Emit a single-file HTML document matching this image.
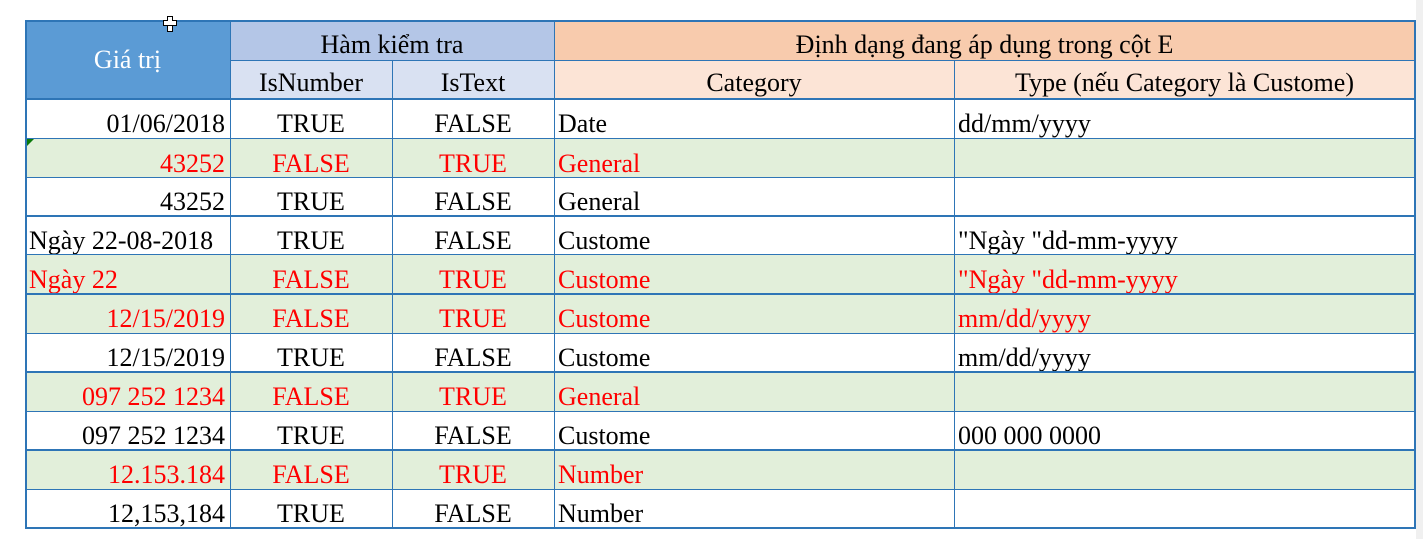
<!DOCTYPE html>
<html><head><meta charset="utf-8"><style>
body{margin:0;width:1423px;height:539px;background:#fff;position:relative;overflow:hidden;font-family:"Liberation Serif","Times New Roman",Times,serif;font-size:26px;}
.c{position:absolute;box-sizing:border-box;display:flex;align-items:flex-end;line-height:26px;padding-bottom:1px;white-space:nowrap;font-family:"Liberation Serif","Times New Roman",Times,serif;}
.r{justify-content:flex-end;padding-right:5px}
.m{justify-content:center}
.l{padding-left:4px}
.red{color:#f00}
.hl{position:absolute;background:#2e75b6;}
</style></head><body>
<div style="position:absolute;left:1416px;top:0;width:7px;height:539px;background:#f0f0f0"></div>
<div class="c m" style="left:25px;top:20px;width:205px;height:79px;background:#5b9bd5;color:#fff;align-items:center;padding:0">Giá trị</div>
<div class="c m" style="left:230px;top:20px;width:324px;height:41px;background:#b4c6e7;padding-bottom:3px">Hàm kiểm tra</div>
<div class="c m" style="left:554px;top:20px;width:861px;height:41px;background:#f8cbad;padding-bottom:3px">Định dạng đang áp dụng trong cột E</div>
<div class="c m" style="left:230px;top:61px;width:162px;height:38px;background:#d9e1f2;padding-bottom:3px">IsNumber</div>
<div class="c m" style="left:392px;top:61px;width:162px;height:38px;background:#d9e1f2;padding-bottom:3px">IsText</div>
<div class="c m" style="left:554px;top:61px;width:400px;height:38px;background:#fce4d6;padding-bottom:3px">Category</div>
<div class="c m" style="left:954px;top:61px;width:461px;height:38px;background:#fce4d6;padding-bottom:3px">Type (nếu Category là Custome)</div>

<div style="position:absolute;left:25px;top:138px;width:1390px;height:40px;background:#e2efda"></div>
<div style="position:absolute;left:25px;top:255px;width:1390px;height:78px;background:#e2efda"></div>
<div style="position:absolute;left:25px;top:372px;width:1390px;height:39px;background:#e2efda"></div>
<div style="position:absolute;left:25px;top:450px;width:1390px;height:39px;background:#e2efda"></div>

<div class="c r" style="left:25px;top:99px;width:205px;height:39px">01/06/2018</div>
<div class="c m" style="left:230px;top:99px;width:162px;height:39px">TRUE</div>
<div class="c m" style="left:392px;top:99px;width:162px;height:39px">FALSE</div>
<div class="c l" style="left:554px;top:99px;width:400px;height:39px">Date</div>
<div class="c l" style="left:954px;top:99px;width:461px;height:39px">dd/mm/yyyy</div>

<div class="c r red" style="left:25px;top:138px;width:205px;height:40px">43252</div>
<div class="c m red" style="left:230px;top:138px;width:162px;height:40px">FALSE</div>
<div class="c m red" style="left:392px;top:138px;width:162px;height:40px">TRUE</div>
<div class="c l red" style="left:554px;top:138px;width:400px;height:40px">General</div>

<div class="c r" style="left:25px;top:178px;width:205px;height:38px">43252</div>
<div class="c m" style="left:230px;top:178px;width:162px;height:38px">TRUE</div>
<div class="c m" style="left:392px;top:178px;width:162px;height:38px">FALSE</div>
<div class="c l" style="left:554px;top:178px;width:400px;height:38px">General</div>

<div class="c l" style="left:25px;top:216px;width:205px;height:39px">Ngày 22-08-2018</div>
<div class="c m" style="left:230px;top:216px;width:162px;height:39px">TRUE</div>
<div class="c m" style="left:392px;top:216px;width:162px;height:39px">FALSE</div>
<div class="c l" style="left:554px;top:216px;width:400px;height:39px">Custome</div>
<div class="c l" style="left:954px;top:216px;width:461px;height:39px">"Ngày "dd-mm-yyyy</div>

<div class="c l red" style="left:25px;top:255px;width:205px;height:39px">Ngày 22</div>
<div class="c m red" style="left:230px;top:255px;width:162px;height:39px">FALSE</div>
<div class="c m red" style="left:392px;top:255px;width:162px;height:39px">TRUE</div>
<div class="c l red" style="left:554px;top:255px;width:400px;height:39px">Custome</div>
<div class="c l red" style="left:954px;top:255px;width:461px;height:39px">"Ngày "dd-mm-yyyy</div>

<div class="c r red" style="left:25px;top:294px;width:205px;height:39px">12/15/2019</div>
<div class="c m red" style="left:230px;top:294px;width:162px;height:39px">FALSE</div>
<div class="c m red" style="left:392px;top:294px;width:162px;height:39px">TRUE</div>
<div class="c l red" style="left:554px;top:294px;width:400px;height:39px">Custome</div>
<div class="c l red" style="left:954px;top:294px;width:461px;height:39px">mm/dd/yyyy</div>

<div class="c r" style="left:25px;top:333px;width:205px;height:39px">12/15/2019</div>
<div class="c m" style="left:230px;top:333px;width:162px;height:39px">TRUE</div>
<div class="c m" style="left:392px;top:333px;width:162px;height:39px">FALSE</div>
<div class="c l" style="left:554px;top:333px;width:400px;height:39px">Custome</div>
<div class="c l" style="left:954px;top:333px;width:461px;height:39px">mm/dd/yyyy</div>

<div class="c r red" style="left:25px;top:372px;width:205px;height:39px">097 252 1234</div>
<div class="c m red" style="left:230px;top:372px;width:162px;height:39px">FALSE</div>
<div class="c m red" style="left:392px;top:372px;width:162px;height:39px">TRUE</div>
<div class="c l red" style="left:554px;top:372px;width:400px;height:39px">General</div>

<div class="c r" style="left:25px;top:411px;width:205px;height:39px">097 252 1234</div>
<div class="c m" style="left:230px;top:411px;width:162px;height:39px">TRUE</div>
<div class="c m" style="left:392px;top:411px;width:162px;height:39px">FALSE</div>
<div class="c l" style="left:554px;top:411px;width:400px;height:39px">Custome</div>
<div class="c l" style="left:954px;top:411px;width:461px;height:39px">000 000 0000</div>

<div class="c r red" style="left:25px;top:450px;width:205px;height:39px">12.153.184</div>
<div class="c m red" style="left:230px;top:450px;width:162px;height:39px">FALSE</div>
<div class="c m red" style="left:392px;top:450px;width:162px;height:39px">TRUE</div>
<div class="c l red" style="left:554px;top:450px;width:400px;height:39px">Number</div>

<div class="c r" style="left:25px;top:489px;width:205px;height:39px">12,153,184</div>
<div class="c m" style="left:230px;top:489px;width:162px;height:39px">TRUE</div>
<div class="c m" style="left:392px;top:489px;width:162px;height:39px">FALSE</div>
<div class="c l" style="left:554px;top:489px;width:400px;height:39px">Number</div>

<div style="position:absolute;left:27px;top:139px;width:0;height:0;border-top:7px solid #0a7a0a;border-right:7px solid transparent"></div>

<div class="hl" style="left:25px;top:20px;width:1391px;height:2px"></div>
<div class="hl" style="left:230px;top:60px;width:1185px;height:1px"></div>
<div class="hl" style="left:25px;top:98px;width:1391px;height:2px"></div>
<div class="hl" style="left:25px;top:138px;width:1391px;height:1px"></div>
<div class="hl" style="left:25px;top:177px;width:1391px;height:1px"></div>
<div class="hl" style="left:25px;top:215px;width:1391px;height:2px"></div>
<div class="hl" style="left:25px;top:254px;width:1391px;height:1px"></div>
<div class="hl" style="left:25px;top:293px;width:1391px;height:2px"></div>
<div class="hl" style="left:25px;top:333px;width:1391px;height:1px"></div>
<div class="hl" style="left:25px;top:371px;width:1391px;height:2px"></div>
<div class="hl" style="left:25px;top:411px;width:1391px;height:1px"></div>
<div class="hl" style="left:25px;top:449px;width:1391px;height:2px"></div>
<div class="hl" style="left:25px;top:489px;width:1391px;height:1px"></div>
<div class="hl" style="left:25px;top:527px;width:1391px;height:2px"></div>
<div class="hl" style="left:25px;top:20px;width:2px;height:509px"></div>
<div class="hl" style="left:230px;top:20px;width:1px;height:509px"></div>
<div class="hl" style="left:392px;top:61px;width:1px;height:468px"></div>
<div class="hl" style="left:554px;top:20px;width:1px;height:509px"></div>
<div class="hl" style="left:954px;top:61px;width:1px;height:468px"></div>
<div class="hl" style="left:1414px;top:20px;width:2px;height:509px"></div>

<div style="position:absolute;left:167px;top:16px;width:4px;height:14px;background:#fff;border:1px solid #000"></div>
<div style="position:absolute;left:163px;top:20px;width:12px;height:4px;background:#fff;border:1px solid #000"></div>
<div style="position:absolute;left:168px;top:20px;width:4px;height:5px;background:#fff"></div>
</body></html>
